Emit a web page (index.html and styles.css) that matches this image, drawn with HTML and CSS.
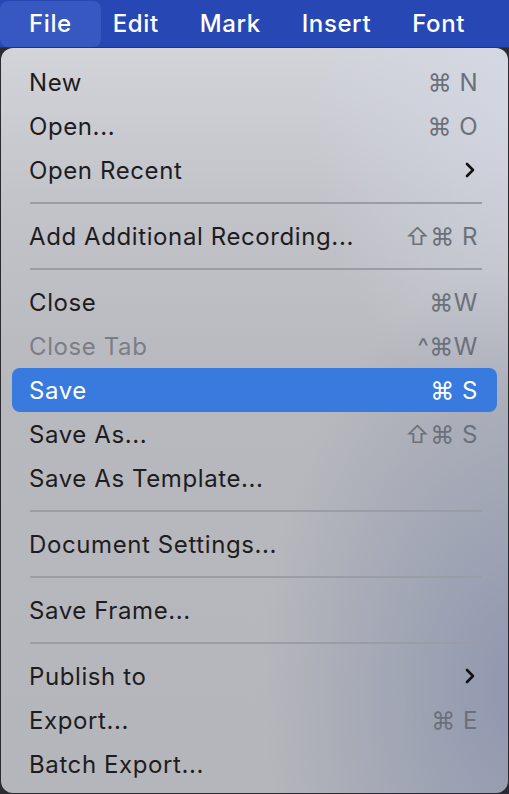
FILE: index.html
```html
<!DOCTYPE html>
<html>
<head>
<meta charset="utf-8">
<link rel="stylesheet" href="styles.css">
</head>
<body>
<div class="menubar">
  <span class="mb-item active">File</span>
  <span class="mb-item">Edit</span>
  <span class="mb-item">Mark</span>
  <span class="mb-item">Insert</span>
  <span class="mb-item">Font</span>
</div>
<div class="menu">
  <div class="row"><span class="label">New</span><span class="key">⌘ N</span></div>
  <div class="row"><span class="label">Open...</span><span class="key">⌘ O</span></div>
  <div class="row"><span class="label">Open Recent</span><svg class="chev" width="12" height="18" viewBox="0 0 12 18"><path d="M3 3l6 6-6 6" fill="none" stroke="#111" stroke-width="2.6" stroke-linecap="round" stroke-linejoin="round"/></svg></div>
  <div class="sep"></div>
  <div class="row"><span class="label">Add Additional Recording...</span><span class="key">⇧⌘ R</span></div>
  <div class="sep"></div>
  <div class="row"><span class="label">Close</span><span class="key">⌘W</span></div>
  <div class="row disabled"><span class="label">Close Tab</span><span class="key">^⌘W</span></div>
  <div class="row selected"><span class="label">Save</span><span class="key">⌘ S</span></div>
  <div class="row"><span class="label">Save As...</span><span class="key">⇧⌘ S</span></div>
  <div class="row"><span class="label">Save As Template...</span></div>
  <div class="sep"></div>
  <div class="row"><span class="label">Document Settings...</span></div>
  <div class="sep"></div>
  <div class="row"><span class="label">Save Frame...</span></div>
  <div class="sep"></div>
  <div class="row"><span class="label">Publish to</span><svg class="chev" width="12" height="18" viewBox="0 0 12 18"><path d="M3 3l6 6-6 6" fill="none" stroke="#111" stroke-width="2.6" stroke-linecap="round" stroke-linejoin="round"/></svg></div>
  <div class="row"><span class="label">Export...</span><span class="key">⌘ E</span></div>
  <div class="row"><span class="label">Batch Export...</span></div>
</div>
</body>
</html>
```
FILE: styles.css
```css
html, body {
  margin: 0;
  padding: 0;
}
body {
  width: 509px;
  height: 794px;
  overflow: hidden;
  background: #2a2b30;
  font-family: Inter, "Noto Sans", sans-serif;
}
.menubar {
  background: #2748b4;
  border-bottom: 1px solid #1f3584;
  display: flex;
  align-items: center;
  gap: 41px;
  padding-left: 29px;
  box-sizing: border-box;
  height: 48px;
}
.mb-item {
  position: relative;
  color: #fff;
  font-size: 24px;
  font-weight: 500;
  letter-spacing: 0.6px;
  line-height: 46px;
}
.mb-item.active { z-index: 0; }
.mb-item.active::before {
  content: "";
  position: absolute;
  top: 0;
  bottom: 0;
  left: -29px;
  right: -29px;
  background: #3658c0;
  border-radius: 8px;
  z-index: -1;
}
.menu {
  margin-left: 1px;
  width: 507px;
  height: 745px;
  box-sizing: border-box;
  border-radius: 12px;
  padding: 12px 11px 6px 11px;
  background:
    radial-gradient(ellipse 260px 420px at 520px 640px, rgba(130,140,170,0.75), rgba(130,140,170,0) 100%),
    radial-gradient(ellipse 200px 300px at 510px 60px, rgba(215,220,235,0.6), rgba(215,220,235,0) 100%),
    linear-gradient(180deg, #d2d4da 0%, #c3c4ca 20%, #b8b9be 45%, #b5b6bb 100%);
}
.row {
  height: 44px;
  display: flex;
  align-items: center;
  justify-content: space-between;
  padding: 0 19px 0 17px;
  border-radius: 8px;
  color: #1d1d1f;
  font-size: 24px;
  letter-spacing: 0.6px;
}
.key {
  color: #6c707b;
  font-size: 24px;
  letter-spacing: 0.5px;
}
.row.disabled .label { color: #7b7e86; }
.row.selected {
  background: #387ade;
  color: #fff;
}
.row.selected .key { color: #fff; }
.chev { margin-right: 2px; }
.sep {
  height: 2px;
  margin: 10px 15px 10px 18px;
  background: #9a9ca6;
}
```
